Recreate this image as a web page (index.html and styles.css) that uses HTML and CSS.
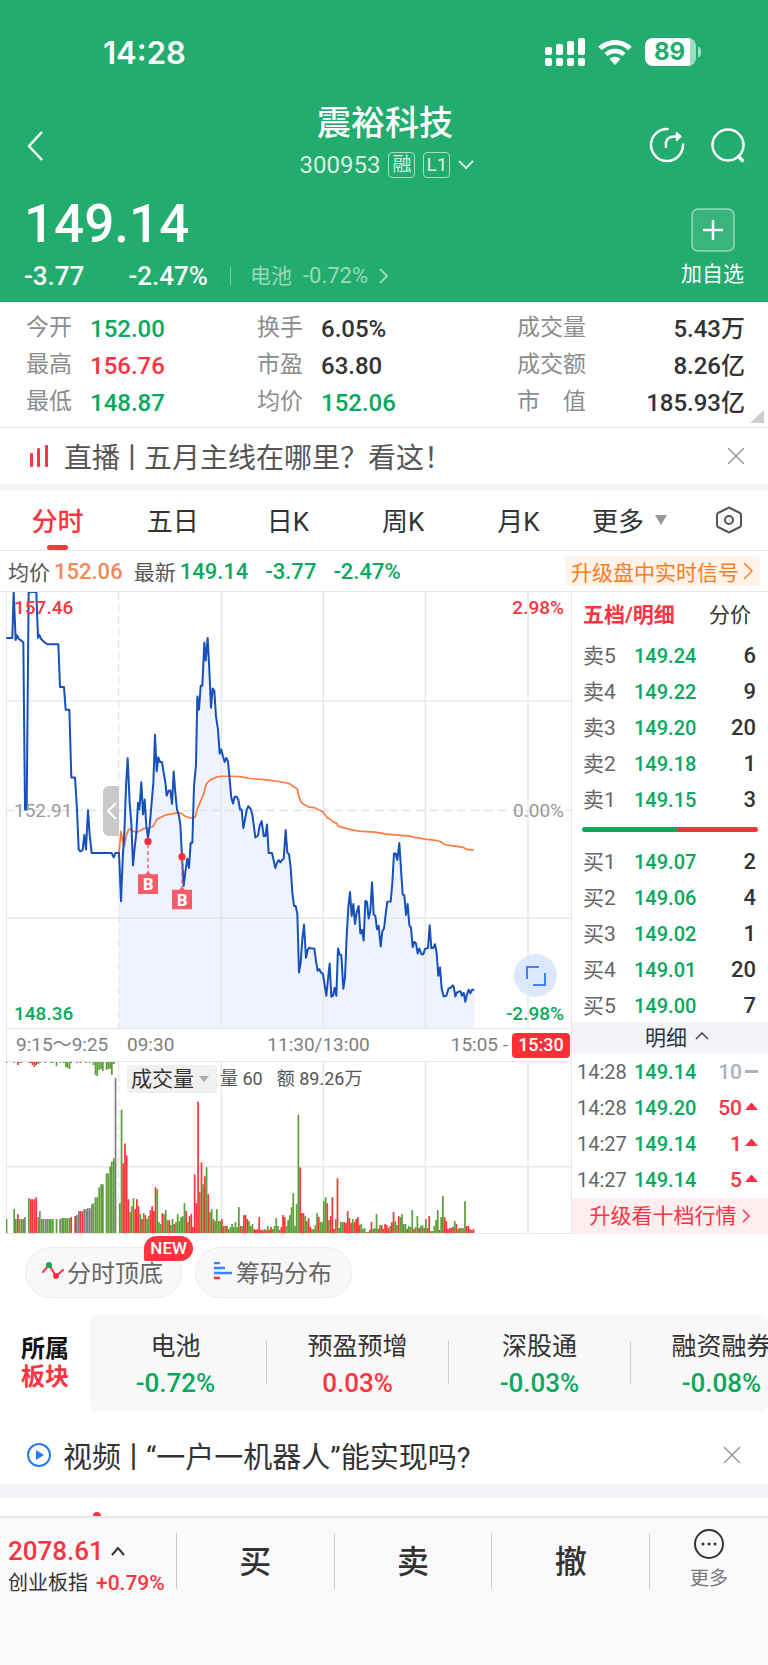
FILE: index.html
```html
<!DOCTYPE html>
<html lang="zh-CN">
<head>
<meta charset="utf-8">
<meta name="viewport" content="width=device-width, initial-scale=1">
<title>震裕科技 300953</title>
<link rel="stylesheet" href="styles.css">
</head>
<body>
<header class="hero">
  <div class="status">
    <span class="status-time">14:28</span>
    <span class="status-icons">
      <svg width="40" height="28" viewBox="0 0 40 28" fill="#fff" aria-hidden="true">
        <rect x="0" y="9" width="7" height="8" rx="2"/><rect x="11" y="6" width="7" height="11" rx="2"/><rect x="22" y="3" width="7" height="14" rx="2"/><rect x="33" y="0" width="7" height="17" rx="2"/>
        <rect x="0" y="20" width="7" height="8" rx="2"/><rect x="11" y="20" width="7" height="8" rx="2"/><rect x="22" y="20" width="7" height="8" rx="2"/><rect x="33" y="20" width="7" height="8" rx="2"/>
      </svg>
      <svg width="34" height="26" viewBox="0 0 34 26" fill="none" aria-hidden="true">
        <path d="M2 9.500A21.500 21.500 0 0 1 32 9.500" stroke="#fff" stroke-width="5"/>
        <path d="M8 15.500A13 13 0 0 1 26 15.500" stroke="#fff" stroke-width="4.500"/>
        <path d="M17 26l-5.500-6a8 8 0 0 1 11 0z" fill="#fff"/>
      </svg>
      <span class="battery">89</span>
    </span>
  </div>
  <div class="nav">
    <button class="icon-btn" aria-label="返回"><svg width="20" height="30" viewBox="0 0 20 30" fill="none" stroke="#fff" stroke-width="2.500"><path d="M18 1L5 15l13 14"/></svg></button>
    <div class="nav-title">
      <h1>震裕科技</h1>
      <div class="code"><span>300953</span><span class="tag">融</span><span class="tag">L1</span><svg width="16" height="10" viewBox="0 0 16 10" fill="none" stroke="#d8f0e4" stroke-width="2"><path d="M1 1l7 7 7-7"/></svg></div>
    </div>
    <div class="nav-actions">
      <button class="icon-btn" aria-label="分享"><svg width="36" height="36" viewBox="0 0 36 36" fill="none" stroke="#fff" stroke-width="2.500" stroke-linecap="round"><path d="M18.500 2A16 16 0 1 0 34 17.500"/><path d="M17 20c-1-8 3-11 10-10.500"/><path d="M27.500 5.500l4.500 4-4.500 4z" fill="#fff" stroke-width="1.500" stroke-linejoin="round"/></svg></button>
      <button class="icon-btn" aria-label="搜索"><svg width="36" height="36" viewBox="0 0 36 36" fill="none" stroke="#fff" stroke-width="2.500" stroke-linecap="round"><circle cx="18" cy="18" r="15.500"/><path d="M28.500 29.500l4 4" stroke-width="3.500"/></svg></button>
    </div>
  </div>
  <div class="price-row">
    <div>
      <div class="price">149.14</div>
      <div class="change">
        <span>-3.77</span><span class="change-pct">-2.47%</span>
        <a class="sector-link" href="#"><span>电池</span><span class="sector-pct">-0.72%</span><svg width="10" height="16" viewBox="0 0 10 16" fill="none" stroke="currentColor" stroke-width="2"><path d="M1 1l7 7-7 7"/></svg></a>
      </div>
    </div>
    <button class="add"><svg width="44" height="44" viewBox="0 0 44 44" fill="none"><rect x="1" y="1" width="42" height="42" rx="6" fill="#fff" fill-opacity=".1" stroke="#fff" stroke-opacity=".5" stroke-width="1.500"/><path d="M22 12v20M12 22h20" stroke="#fff" stroke-width="2.500"/></svg><span>加自选</span></button>
  </div>
</header>

<main>
<section class="quotes">
  <dl>
    <div><dt>今开</dt><dd class="down">152.00</dd></div>
    <div><dt>最高</dt><dd class="up">156.76</dd></div>
    <div><dt>最低</dt><dd class="down">148.87</dd></div>
  </dl>
  <dl>
    <div><dt>换手</dt><dd>6.05%</dd></div>
    <div><dt>市盈</dt><dd>63.80</dd></div>
    <div><dt>均价</dt><dd class="down">152.06</dd></div>
  </dl>
  <dl class="wide">
    <div><dt>成交量</dt><dd>5.43万</dd></div>
    <div><dt>成交额</dt><dd>8.26亿</dd></div>
    <div><dt>市　值</dt><dd>185.93亿</dd></div>
  </dl>
  <span class="corner"></span>
</section>

<section class="notice">
  <svg width="18" height="24" viewBox="0 0 18 24" fill="#fb3440" aria-hidden="true"><rect x="0" y="9" width="3" height="14" rx="1"/><rect x="7" y="4" width="3" height="19" rx="1"/><rect x="15" y="1" width="3" height="22" rx="1"/></svg>
  <a href="#">直播<span class="bar">丨</span>五月主线在哪里？看这！</a>
  <button class="icon-btn" aria-label="关闭"><svg width="18" height="18" viewBox="0 0 18 18" stroke="#999" stroke-width="1.500"><path d="M1 1l16 16M17 1L1 17"/></svg></button>
</section>

<nav class="tabs">
  <button class="active">分时</button>
  <button>五日</button>
  <button>日K</button>
  <button>周K</button>
  <button>月K</button>
  <button class="more">更多<svg width="14" height="10" viewBox="0 0 14 10" fill="#999"><path d="M1 0h12L7 10z"/></svg></button>
  <button class="gear" aria-label="设置"><svg width="28" height="30" viewBox="0 0 28 30" fill="none" stroke="#555" stroke-width="2" stroke-linejoin="round"><path d="M13 3q1-1 2 0l10 5q1 1 1 2v10q0 1-1 2l-10 5q-1 1-2 0l-10-5q-1-1-1-2V10q0-1 1-2z"/><circle cx="14" cy="15" r="4"/></svg></button>
</nav>

<section class="legend">
  <span>均价</span><b class="avg">152.06</b>
  <span class="latest">最新</span><b class="down">149.14</b><b class="down diff">-3.77</b><b class="down diff">-2.47%</b>
  <a href="#" class="signal">升级盘中实时信号<svg width="11" height="18" viewBox="0 0 11 18" fill="none" stroke="currentColor" stroke-width="1.500"><path d="M1 1l8 8-8 8"/></svg></a>
</section>

<section class="board">
  <div class="charts">
    <div class="price-chart">
      <svg viewBox="18 36 1698 1311" preserveAspectRatio="none" fill="none">
        <g id="area" fill="#eff3ff"></g>
        <g stroke="#e6e7e9" stroke-width="4">
          <path d="M664 36V1347M970 36V1347M1276 36V1347M1584 36V1347M18 364H1716M18 1017H1716"/>
          <path d="M356 36V1347" stroke-dasharray="24 12"/>
          <path d="M18 693H1716" stroke="#d9e4ec" stroke-dasharray="26 15"/>
        </g>
        <g id="average" stroke="#ff7a3c" stroke-width="5" stroke-linejoin="round"></g>
        <g id="price" stroke="#1550bb" stroke-width="6" stroke-linejoin="round"></g>
        <g stroke="#f25560" stroke-width="4" stroke-dasharray="12 8"><path d="M444 795V880M546 840V926"/></g>
        <circle cx="444" cy="786" r="11" fill="#fb2f40"/><circle cx="546" cy="832" r="11" fill="#fb2f40"/>
        <g fill="#f75c69"><path d="M414 885h21l9-9 9 9h21v59h-60z"/><path d="M516 931h21l9-9 9 9h21v59h-60z"/></g>
        <g fill="#fff" font-family="Open Sans, sans-serif" font-weight="700" font-size="50" text-anchor="middle"><text x="444" y="933">B</text><text x="546" y="979">B</text></g>
      </svg>
      <span class="axis top left up">157.46</span><span class="axis top right up">2.98%</span>
      <span class="axis mid left">152.91</span><span class="axis mid right">0.00%</span>
      <span class="axis bottom left down">148.36</span><span class="axis bottom right down">-2.98%</span>
      <button class="handle" aria-label="收起竞价"><svg width="10" height="18" viewBox="0 0 10 18" fill="none" stroke="#fff" stroke-width="2"><path d="M9 1L1 9l8 8"/></svg></button>
      <button class="expand" aria-label="全屏"><svg width="20" height="20" viewBox="0 0 20 20" fill="none" stroke="#3b83f6" stroke-width="2"><path d="M1 13V1h12M19 7v12H7"/></svg></button>
    </div>
    <div class="times">
      <span class="auction">9:15～9:25</span>
      <span>09:30</span><span class="noon">11:30/13:00</span><span class="close">15:05 -</span><button class="after">15:30</button>
    </div>
    <div class="volume-chart">
      <svg viewBox="18 125 1698 516" preserveAspectRatio="none" fill="none">
        <g stroke="#e6e7e9" stroke-width="4">
          <path d="M664 125V641M970 125V641M1276 125V641M1584 125V641M18 441H1716"/>
          <path d="M356 125V641" stroke-dasharray="24 12"/>
        </g>
        <g id="volume"></g>
      </svg>
      <div class="volume-head"><button>成交量<svg width="10" height="6" viewBox="0 0 10 6" fill="#aaa"><path d="M0 0h10L5 6z"/></svg></button><span>量 60</span><span class="amount">额 89.26万</span></div>
    </div>
  </div>

  <aside class="depth">
    <div class="depth-tabs"><button class="active">五档/明细</button><button>分价</button></div>
    <table class="book">
      <tr><th>卖5</th><td>149.24</td><td>6</td></tr>
      <tr><th>卖4</th><td>149.22</td><td>9</td></tr>
      <tr><th>卖3</th><td>149.20</td><td>20</td></tr>
      <tr><th>卖2</th><td>149.18</td><td>1</td></tr>
      <tr><th>卖1</th><td>149.15</td><td>3</td></tr>
    </table>
    <div class="ratio"></div>
    <table class="book">
      <tr><th>买1</th><td>149.07</td><td>2</td></tr>
      <tr><th>买2</th><td>149.06</td><td>4</td></tr>
      <tr><th>买3</th><td>149.02</td><td>1</td></tr>
      <tr><th>买4</th><td>149.01</td><td>20</td></tr>
      <tr><th>买5</th><td>149.00</td><td>7</td></tr>
    </table>
    <button class="detail">明细<svg width="14" height="8" viewBox="0 0 14 8" fill="none" stroke="#444" stroke-width="1.500"><path d="M1 7l6-6 6 6"/></svg></button>
    <table class="trades">
      <tr><td>14:28</td><td>149.14</td><td class="flat">10<svg width="13" height="12" viewBox="0 0 13 12" fill="#a9b2bd"><rect y="5" width="13" height="3"/></svg></td></tr>
      <tr><td>14:28</td><td>149.20</td><td class="up">50<svg width="13" height="12" viewBox="0 0 13 12" fill="#fb2f40"><path d="M0 9l6-7h1l6 7z"/></svg></td></tr>
      <tr><td>14:27</td><td>149.14</td><td class="up">1<svg width="13" height="12" viewBox="0 0 13 12" fill="#fb2f40"><path d="M0 9l6-7h1l6 7z"/></svg></td></tr>
      <tr><td>14:27</td><td>149.14</td><td class="up">5<svg width="13" height="12" viewBox="0 0 13 12" fill="#fb2f40"><path d="M0 9l6-7h1l6 7z"/></svg></td></tr>
    </table>
    <a href="#" class="upgrade">升级看十档行情<svg width="9" height="14" viewBox="0 0 9 14" fill="none" stroke="currentColor" stroke-width="1.500"><path d="M1 1l6 6-6 6"/></svg></a>
  </aside>
</section>

<section class="tools">
  <button><svg width="22" height="20" viewBox="0 0 22 20" fill="none" stroke-width="2" stroke-linecap="round"><path d="M1 11l6-7 7 11 7-6" stroke="#fb3440"/><circle cx="7" cy="4" r="3" fill="#0aa85c"/><circle cx="14" cy="15" r="3" fill="#fb3440"/></svg>分时顶底<span class="new">NEW</span></button>
  <button><svg width="20" height="18" viewBox="0 0 20 18"><path d="M1 1h6M1 6h11M1 11h18" stroke="#3b83f6" stroke-width="2.500"/><path d="M1 16h6" stroke="#fb3440" stroke-width="2.500"/></svg>筹码分布</button>
</section>

<section class="sectors">
  <h2>所属<br><em>板块</em></h2>
  <ul>
    <li><span>电池</span><b class="down">-0.72%</b></li>
    <li><span>预盈预增</span><b class="up">0.03%</b></li>
    <li><span>深股通</span><b class="down">-0.03%</b></li>
    <li><span>融资融券</span><b class="down">-0.08%</b></li>
  </ul>
</section>

<section class="notice video">
  <svg width="24" height="24" viewBox="0 0 24 24" fill="none" aria-hidden="true"><circle cx="12" cy="12" r="11" stroke="#2b7bf8" stroke-width="2"/><path d="M9 7l8 5-8 5z" fill="#2b7bf8"/></svg>
  <a href="#">视频<span class="bar">丨</span>“一户一机器人”能实现吗?</a>
  <button class="icon-btn" aria-label="关闭"><svg width="18" height="18" viewBox="0 0 18 18" stroke="#999" stroke-width="1.500"><path d="M1 1l16 16M17 1L1 17"/></svg></button>
</section>
<div class="next"><svg width="8" height="4" viewBox="0 0 8 4" fill="#fb3440"><circle cx="4" cy="4" r="4"/></svg></div>
</main>

<footer class="bottom">
  <button class="index">
    <span class="index-value">2078.61<svg width="14" height="10" viewBox="0 0 14 10" fill="none" stroke="#333" stroke-width="2"><path d="M1 9l6-7 6 7"/></svg></span>
    <span class="index-name">创业板指<b>+0.79%</b></span>
  </button>
  <button class="trade">买</button>
  <button class="trade">卖</button>
  <button class="trade">撤</button>
  <button class="others"><svg width="30" height="30" viewBox="0 0 30 30" fill="none"><circle cx="15" cy="15" r="14" stroke="#333" stroke-width="2"/><g fill="#333"><circle cx="9" cy="15" r="1.500"/><circle cx="15" cy="15" r="1.500"/><circle cx="21" cy="15" r="1.500"/></g></svg>更多</button>
</footer>
<script src="chart.js"></script>
</body>
</html>
```
FILE: styles.css
```css
* { box-sizing: border-box; }
body {
  margin: 0;
  min-height: 100vh;
  display: flex;
  flex-direction: column;
  background: #fff;
  color: #333;
  font-family: Roboto, "Noto Sans CJK SC", sans-serif;
  overflow-x: hidden;
}
button { border: 0; padding: 0; margin: 0; background: none; font: inherit; color: inherit; }
a { color: inherit; text-decoration: none; }
svg { display: block; flex: none; }
dl, dd, h1, h2, ul { margin: 0; padding: 0; }
.up { color: #fb3440; }
.down { color: #0aa85c; }
.icon-btn { display: flex; }

.hero { background: #22ac6e; color: #fff; height: 302px; padding: 34px 22px 0 24px; }
.status { display: flex; justify-content: space-between; align-items: center; height: 36px; padding: 0 45px 0 79px; }
.status-time { font-family: Inter, sans-serif; font-size: 31px; font-weight: 600; }
.status-icons { display: flex; align-items: center; gap: 13px; }
.battery {
  position: relative;
  width: 51px;
  height: 28px;
  padding-right: 2px;
  border-radius: 8px;
  background: linear-gradient(90deg, #fff 89%, #9fdcc0 89%);
  color: #22ac6e;
  font: 700 24px/28px Inter, sans-serif;
  text-align: center;
  margin-right: 5px;
}
.battery::after {
  content: "";
  position: absolute;
  right: -5px;
  top: 9px;
  width: 3px;
  height: 10px;
  border-radius: 0 3px 3px 0;
  background: #9fdcc0;
}
.nav { display: grid; grid-template-columns: 1fr auto 1fr; align-items: center; margin-top: 31px; }
.nav-title { text-align: center; }
h1 { font-size: 34px; line-height: 44px; font-weight: 500; }
.code { display: flex; align-items: center; justify-content: center; gap: 8px; height: 40px; padding-left: 4px; font-size: 24px; color: #d8f0e4; }
.tag { width: 27px; height: 26px; border: 1px solid #a9dec6; border-radius: 4px; font-size: 19px; line-height: 24px; text-align: center; }
.nav-actions { display: flex; justify-content: flex-end; gap: 25px; padding-top: 4px; }
.nav > .icon-btn { padding-top: 5px; }
.price-row { display: flex; justify-content: space-between; margin-top: 9px; }
.price { font-size: 53px; line-height: 60px; font-weight: 500; }
.change { display: flex; align-items: center; height: 44px; font-size: 26px; font-weight: 500; }
.change-pct { margin-left: 44px; }
.sector-link { display: flex; align-items: center; gap: 11px; margin-left: 22px; font-size: 21px; line-height: 30px; font-weight: 400; color: #9bd9bd; }
.sector-link::before { content: ""; width: 1px; height: 18px; background: #7bcca7; margin-right: 8px; }
.sector-pct { font-size: 22px; }
.add { display: flex; flex-direction: column; align-items: center; gap: 7px; padding: 14px 2px 0 0; font-size: 21px; line-height: 30px; }

.quotes { position: relative; display: grid; grid-template-columns: 231px 260px 1fr; padding: 8px 23px 6px 26px; border-bottom: 1px solid #e6e7e9; }
.quotes dl > div { display: flex; align-items: center; height: 37px; }
.quotes dt { width: 64px; padding-bottom: 2px; font-size: 23px; line-height: 30px; color: #8c8c8c; }
.quotes dd { font-size: 24px; line-height: 30px; font-weight: 500; }
.quotes .wide dt { width: 80px; }
.quotes .wide dd { margin-left: auto; }
.corner { position: absolute; right: 4px; bottom: 4px; border-left: 14px solid transparent; border-bottom: 13px solid #ccc; }

.notice { display: flex; align-items: center; height: 56px; padding: 0 23px 0 30px; font-size: 28px; color: #555; }
.notice a { margin-left: 16px; }
.notice .bar { margin: 0 -2px; }
.notice .icon-btn { margin-left: auto; }
.notice.video { height: 73px; padding: 15px 27px 0; font-size: 29px; color: #333; }
.notice.video a { margin-left: 12px; }

.tabs { display: grid; grid-template-columns: repeat(5, 15%) 1fr 74px; height: 67px; border-top: 7px solid #f2f4f8; border-bottom: 1px solid #e6e7e9; font-size: 26px; }
.tabs button { display: flex; align-items: center; justify-content: center; position: relative; padding-bottom: 2px; }
.tabs .active { color: #fb3440; font-weight: 500; }
.tabs .active::after { content: ""; position: absolute; bottom: 0; width: 21px; height: 5px; border-radius: 3px; background: #fb3440; }
.tabs .more { justify-content: flex-start; padding-left: 16px; gap: 10px; }
.tabs .gear { justify-content: flex-start; padding-left: 21px; }

.legend { display: flex; align-items: center; height: 40px; padding: 0 8px; font-size: 21px; color: #555; }
.legend b { margin-left: 4px; font-size: 22px; font-weight: 500; }
.legend .avg { color: #ee8a5a; }
.legend .latest { margin-left: 11px; }
.legend .diff { margin-left: 17px; }
.signal { display: flex; align-items: center; gap: 4px; margin-left: auto; height: 30px; padding: 0 6px; border-radius: 4px; background: #fff3ea; color: #fb7d22; }

.board { display: flex; border-top: 1px solid #e6e7e9; }
.charts { flex: 1; min-width: 0; margin-left: 6px; box-shadow: inset 1px 0 #e6e7e9, inset -1px 0 #e6e7e9; }
.price-chart { position: relative; height: 437px; border-bottom: 1px solid #e6e7e9; }
.price-chart > svg, .volume-chart > svg { width: 100%; height: 100%; }
.axis { position: absolute; font-size: 19px; line-height: 20px; font-weight: 500; }
.left { left: 8px; }
.right { right: 8px; }
.top { top: 6px; }
.mid { top: 209px; color: #999; font-weight: 400; }
.bottom.axis { bottom: 4px; }
.handle { position: absolute; left: 97px; top: 194px; width: 16px; height: 50px; padding-left: 4px; border-radius: 6px 0 0 6px; background: #c9c9c9; }
.expand { position: absolute; right: 15px; bottom: 31px; width: 43px; height: 43px; border-radius: 50%; background: #dde8fd; display: flex; align-items: center; justify-content: center; }
.times { display: flex; align-items: center; height: 33px; border-bottom: 1px solid #e6e7e9; font-size: 19px; line-height: 22px; color: #808080; white-space: nowrap; }
.times .auction { width: 121px; padding-left: 10px; }
.times .noon { margin: 0 auto; padding-left: 12px; }
.times .after { width: 58px; height: 25px; margin: 0 2px 0 4px; border-radius: 4px; background: #fb2f36; color: #fff; font-size: 18px; font-weight: 500; }
.volume-chart { position: relative; height: 172px; border-bottom: 1px solid #e6e7e9; }
.volume-head { position: absolute; left: 121px; top: 3px; display: flex; align-items: center; font-size: 18px; line-height: 28px; color: #555; }
.volume-head button { display: flex; align-items: center; gap: 5px; height: 28px; padding: 0 8px 1px 4px; margin-right: 3px; border-radius: 4px; background: #f0f0f0; font-size: 21px; color: #333; }
.amount { margin-left: 14px; }

.depth { width: 196px; display: flex; flex-direction: column; }
.depth-tabs { display: flex; justify-content: space-between; height: 46px; padding: 0 17px 5px 11px; font-size: 21px; }
.depth-tabs .active { color: #fb3440; font-weight: 700; }
.depth table { width: 100%; border-collapse: collapse; table-layout: fixed; font-size: 20px; }
.depth tr { height: 36px; }
.depth th, .depth td { padding: 0; line-height: 24px; font-weight: 500; text-align: left; }
.depth td:nth-child(2) { color: #0aa85c; }
.depth td:last-child { text-align: right; }
.book th:first-child { width: 62px; padding-left: 11px; font-size: 21px; font-weight: 400; color: #666; }
.book td:last-child { padding-right: 12px; font-size: 22px; }
.ratio { height: 5px; margin: 9px 10px 12px; border-radius: 3px; background: linear-gradient(120deg, #0aa85c 54%, #fb3440 54%); }
.detail { display: flex; align-items: center; justify-content: center; gap: 8px; height: 31px; margin-top: -2px; padding: 0 0 3px 14px; background: #f3f4f9; font-size: 21px; }
.trades { margin-top: 1px; }
.trades td:first-child { width: 62px; padding-left: 5px; color: #666; font-weight: 400; }
.trades td:last-child { padding-right: 10px; font-size: 21px; }
.trades svg { display: inline-block; margin-left: 3px; vertical-align: 2px; }
.flat { color: #a9b2bd; }
.upgrade { flex: 1; display: flex; align-items: center; justify-content: center; gap: 5px; background: #ffeef0; color: #fb3440; font-size: 21px; line-height: 30px; }

.tools { display: flex; gap: 13px; padding: 13px 25px 17px; }
.tools button { position: relative; display: flex; align-items: center; justify-content: center; gap: 3px; width: 157px; height: 51px; padding: 0 2px 3px 0; border: 1px solid #ececec; border-radius: 26px; background: #f8f8f8; font-size: 24px; color: #666; }
.new { position: absolute; right: -12px; top: -12px; padding: 0 6px; border-radius: 13px 13px 13px 2px; background: #fb3440; color: #fff; font-size: 17px; line-height: 25px; font-weight: 500; }

.sectors { display: flex; align-items: center; }
h2 { width: 89px; padding-left: 21px; font-size: 24px; line-height: 28px; font-weight: 700; color: #111; }
h2 em { font-style: normal; color: #fb3440; }
.sectors ul { flex: 1; display: flex; height: 96px; overflow: hidden; list-style: none; border-radius: 8px; background: #f8f8f8; }
.sectors li { position: relative; flex: 0 0 182px; display: flex; flex-direction: column; align-items: center; padding: 14px 9px 0 0; font-size: 25px; line-height: 36px; }
.sectors li + li::before { content: ""; position: absolute; left: -5px; top: 26px; width: 1px; height: 43px; background: #ccc; }
.sectors b { font-size: 26px; font-weight: 500; }
.next { height: 32px; border-top: 14px solid #f2f4f8; padding: 14px 0 0 93px; }

footer.bottom { flex: 1; display: grid; grid-template-columns: 176px 1fr 1fr 1fr 119px; align-items: start; padding-top: 15px; border-top: 2px solid #e4e5e8; background: #fafafc; }
.bottom button { height: 56px; }
.index { padding: 2px 0 0 8px; text-align: left; }
.index-value { display: flex; align-items: center; gap: 7px; font-size: 26px; line-height: 32px; font-weight: 500; color: #fb3440; }
.index-name { display: flex; align-items: center; font-size: 20px; line-height: 32px; }
.index b { margin-left: 8px; font-size: 21px; font-weight: 500; color: #fb3440; }
.bottom .trade { padding-top: 2px; border-left: 1px solid #ccc; font-size: 32px; line-height: 54px; font-weight: 500; }
.others { display: flex; flex-direction: column; align-items: center; justify-content: center; gap: 7px; padding-bottom: 2px; border-left: 1px solid #ccc; font-size: 19px; line-height: 26px; color: #777; }
```
FILE: chart.js
```javascript
const NS = "http://www.w3.org/2000/svg";

const auction = "19,174 37,174 41,36 47,180 51,166 57,178 64,182 70,188 75,690 80,690 86,36 109,36 114,174 118,165 124,178 132,186 142,193 175,193 180,322 192,322 197,390 208,390 214,594 225,594 231,690 236,810 241,816 248,812 253,766 258,810 264,692 269,766 275,821 335,821 341,834 346,821 357,821";

const morning = "357,821 363,966 368,840 373,760 378,620 383,536 389,670 394,730 399,858 404,805 409,760 414,670 418,690 424,608 429,705 434,660 439,740 444,775 449,740 454,680 460,610 465,465 470,575 475,533 480,547 486,547 491,580 496,607 500,648 506,633 511,633 516,673 521,576 526,640 531,690 536,705 541,735 546,831 551,920 557,870 562,838 567,866 572,790 577,790 582,620 588,555 592,350 597,390 602,318 607,318 613,188 617,242 623,174 628,270 633,384 638,326 643,333 648,410 654,450 659,522 664,510 669,530 674,547 679,535 684,545 689,600 694,655 699,672 704,652 710,652 715,660 720,690 725,690 730,746 735,720 740,692 745,680 752,688 757,705 766,774 774,768 779,738 785,725 791,770 796,770 801,735 806,821 816,821 826,866 831,850 836,842 841,849 846,842 851,838 857,752 862,820 867,824 872,865 877,940 882,980 887,980 892,1003 897,1180";

const afternoon = "57,1180 62,1150 67,1080 72,1036 78,1136 83,1112 88,1105 93,1108 103,1108 108,1145 113,1175 118,1170 123,1180 129,1185 134,1218 139,1250 144,1200 149,1153 154,1253 159,1250 164,1226 169,1250 174,1108 179,1126 184,1128 190,1229 195,1195 200,1070 205,985 210,938 215,1010 220,974 225,1034 230,1000 236,980 241,1063 246,1052 251,1084 256,965 261,968 266,1018 271,995 276,909 281,1006 286,1010 291,1050 296,1040 302,1102 307,1056 312,1048 317,1005 322,967 332,967 337,910 342,822 347,822 352,842 358,791 363,870 368,945 373,948 378,1007 383,974 388,1038 393,1045 398,1104 403,1088 408,1093 413,1123 418,1108 424,1125 430,1125 435,1109 444,1106 449,1038 454,1107 460,1106 465,1095 470,1122 475,1190 480,1165 485,1228 491,1252 499,1250 506,1228 512,1226 518,1219 521,1222 526,1252 531,1240 541,1236 546,1250 551,1241 556,1268 561,1245 566,1232 571,1243 576,1232 583,1232";

const averageAm = "357,821 363,756 368,785 371,800 374,798 379,768 385,752 391,748 398,754 408,759 420,754 432,747 445,745 458,742 463,735 470,720 480,715 495,707 515,703 535,700 546,702 552,708 562,713 575,716 586,713 592,688 602,665 612,640 618,615 625,606 635,599 650,592 670,590 695,590 720,591 745,596 775,599 800,601 830,605 850,608 870,613 878,620 892,628";

const averagePm = "52,628 57,652 63,668 72,675 85,682 105,685 115,691 128,696 142,715 152,720 160,728 170,731 174,740 195,746 220,752 245,756 285,758 320,764 390,770 405,774 440,780 470,783 485,788 495,796 525,800 550,804 560,810 581,812";

const minutes = "g30 g124 r70 r90 r78 r34 g21 g27 g35 r24 r34 r27 g19 r14 g20 r18 g14 g17 r23 r27 r22 r46 g44 g11 g9 r20 g19 g23 g13 r13 g8 g14 r9 g11 g19 g12 g16 g17 g30 r22 g11 r17 r19 r6 r59 r30 r132 g41 r71 g49 r57 g66 r39 g21 g24 r14 g12 g24 g12 g12 r14 r7 g7 r7 g4 g6 g9 g6 g11 g6 g26 r7 g7 r18 r18 r14 g12 g7 g9 r4 r3 r4 r16 r3 r3 g4 r3 g7 r3 r6 g4 g7 g15 g7 r3 r6 r18 r16 g7 g13 g18 g26 g40 g7 g29 g119 r66 r20 r20 g17 g12 r15 r6 g4 g4 g8 g20 r16 g11 g11 g32 g36 r30 g13 r17 r36 r4 g14 r55 g5 g11 g11 r11 r10 r22 r15 r10 g14 r11 r14 r16 r8 g9 g4 g5 r1 g1 r3 r11 g4 g5 g19 r4 g8 r8 r4 r9 r8 r5 g7 r11 r21 g12 g8 r17 g16 g19 g9 g9 r4 g7 g6 g23 r4 g6 g17 r5 g7 g8 g5 g14 r5 r17 g2 g2 g7 g13 g23 r3 g16 g37 r16 r12 r4 r5 r5 r6 g12 r9 g4 r5 g5 g5 g32 r7 r7 r4 g3 r4";

const preMarket = "19g14 42g24 47g14 53r19 58g14 64g14 69g14 74k16 86g35 92r34 97r34 103r34 108r36 114g16 119k22 125g14 130g14 136k14 141k14 147g14 152g14 158g14 169g14 180k14 186g15 191g15 197g15 202g15 208g15 213r16 225r17 230k18 236k22 241r22 247r22 252k24 258k24 263k25 269k25 275k29 280g30 286g36 291g36 297g46 303g49 308g49 319g60 324g60 330g67 335g72 341g75 346k156";

const hanging = "19g1 42g1 53r3 58g1 64g1 86g1 92r1 97r3 103r5 108r3 114g2 119g1 136k1 152g1 158g1 169g4 180g1 191g1 197g5 202g6 208g7 213r1 230r1 241r1 258g1 269g1 280g3 286g13 291g14 297g8 303g7 308g9 319g8 324g7 330g7 335g13 341g2";

const colors = { g: "#5da03a", r: "#ff3438", k: "#808080" };

function add(parent, name, attrs) {
  const el = document.createElementNS(NS, name);
  for (const key in attrs) el.setAttribute(key, attrs[key]);
  document.getElementById(parent).appendChild(el);
}

function shift(points, dx) {
  return points.split(" ").map(p => {
    const [x, y] = p.split(",").map(Number);
    return (x + dx) + "," + y;
  }).join(" ");
}

const day = morning + " " + shift(afternoon, 840);
add("area", "polygon", { points: "357,1347 " + day + " 1423,1347" });
add("price", "polyline", { points: auction + " " + day });
add("average", "polyline", { points: averageAm + " " + shift(averagePm, 840) });

function bar(x, color, height, fromTop) {
  const h = height * 3;
  add("volume", "rect", { x, y: fromTop ? 125 : 641 - h, width: 5.2, height: h, fill: colors[color] });
}

minutes.split(" ").forEach((m, i) => bar(357 + i * 5.1, m[0], Number(m.slice(1))));
for (const [list, top] of [[preMarket, false], [hanging, true]]) {
  for (const item of list.split(" ")) {
    const [, x, c, h] = item.match(/(\d+)([grk])(\d+)/);
    bar(Number(x) - 2, c, Number(h), top);
  }
}
```
